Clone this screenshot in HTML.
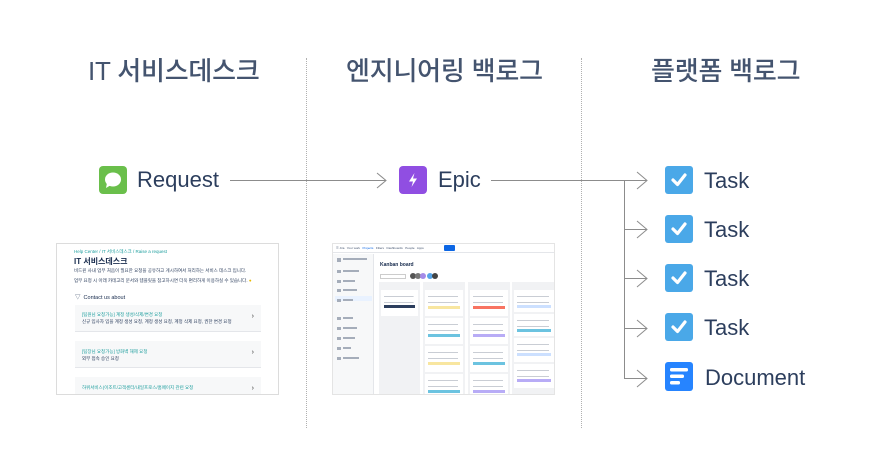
<!DOCTYPE html>
<html><head><meta charset="utf-8"><style>
*{margin:0;padding:0;box-sizing:border-box}
body{width:886px;height:451px;background:#fff;position:relative;overflow:hidden;font-family:"Liberation Sans","Noto Sans CJK KR",sans-serif;color:#44546f}
.a{position:absolute}
.h{font-size:26px;font-weight:500;color:#44546f;top:51px;white-space:nowrap;letter-spacing:-0.2px}
.vd{width:0;border-left:1px dotted #b0b0b0;top:58px;height:370px}
.lbl{font-size:22px;color:#2c3e5d;white-space:nowrap}
.ln{height:1px;background:#8c8c8c}
.ic{width:28px;height:28px;border-radius:4px}
.t{font-size:4.5px;line-height:5px;white-space:nowrap;overflow:hidden}
.cd{background:#fff repeating-linear-gradient(#fff 0 3px,#c9cdd4 3px 4px,#fff 4px 6px) no-repeat 3px 3px/80% 12px}
</style></head><body>
<div class="a h" style="left:88px">IT 서비스데스크</div>
<div class="a h" style="left:346px">엔지니어링 백로그</div>
<div class="a h" style="left:651px">플랫폼 백로그</div>
<div class="a vd" style="left:306px"></div>
<div class="a vd" style="left:581px"></div>

<div class="a ic" style="left:99px;top:166px;background:#6abf4b"></div>
<svg class="a" style="left:99px;top:166px" width="28" height="28"><ellipse cx="14" cy="13.5" rx="8" ry="7" fill="#fff"/><path d="M8 17 L7 22 L12 19Z" fill="#fff"/></svg>
<div class="a lbl" style="left:137px;top:167px">Request</div>
<div class="a ln" style="left:230px;top:180px;width:156px"></div>
<svg class="a" style="left:376px;top:172px" width="12" height="17"><path d="M1 1 L10 8.5 L1 16" fill="none" stroke="#8c8c8c" stroke-width="1"/></svg>

<div class="a ic" style="left:399px;top:166px;background:#904ee2"></div>
<svg class="a" style="left:399px;top:166px" width="28" height="28"><path d="M15.5 7 L10 15.5 H14 L12.5 21 L18 12.5 H14Z" fill="#fff"/></svg>
<div class="a lbl" style="left:438px;top:167px">Epic</div>
<div class="a ln" style="left:491px;top:180px;width:156px"></div>
<div class="a" style="left:624px;top:180px;width:1px;height:199px;background:#8c8c8c"></div>
<div class="a ln" style="left:624px;top:229px;width:23px"></div>
<div class="a ln" style="left:624px;top:278px;width:23px"></div>
<div class="a ln" style="left:624px;top:328px;width:23px"></div>
<div class="a ln" style="left:624px;top:378px;width:23px"></div>
<svg class="a" style="left:636px;top:0" width="14" height="451" fill="none" stroke="#8c8c8c" stroke-width="1">
<path d="M1 172 L11 180.5 L1 189"/><path d="M1 221 L11 229.5 L1 238"/><path d="M1 270 L11 278.5 L1 287"/><path d="M1 320 L11 328.5 L1 337"/><path d="M1 370 L11 378.5 L1 387"/>
</svg>

<svg class="a" style="left:665px;top:0" width="29" height="451">
<g fill="#4aa8e8"><rect x="0" y="166" width="28" height="28" rx="3"/><rect x="0" y="215" width="28" height="28" rx="3"/><rect x="0" y="264" width="28" height="28" rx="3"/><rect x="0" y="313" width="28" height="28" rx="3"/></g>
<g fill="none" stroke="#fff" stroke-width="3.2" stroke-linecap="round" stroke-linejoin="round">
<path d="M8 180 L12.5 184.5 L20 175"/><path d="M8 229 L12.5 233.5 L20 224"/><path d="M8 278 L12.5 282.5 L20 273"/><path d="M8 327 L12.5 331.5 L20 322"/></g>
<rect x="0" y="362" width="28" height="29" rx="3" fill="#2684ff"/>
<g fill="#fff"><rect x="5" y="368" width="18" height="3.5" rx="1.5"/><rect x="5" y="374.5" width="14" height="3.5" rx="1.5"/><rect x="5" y="381" width="10" height="3.5" rx="1.5"/></g>
</svg>
<div class="a lbl" style="left:704px;top:168px">Task</div>
<div class="a lbl" style="left:704px;top:217px">Task</div>
<div class="a lbl" style="left:704px;top:266px">Task</div>
<div class="a lbl" style="left:704px;top:315px">Task</div>
<div class="a lbl" style="left:705px;top:365px">Document</div>

<div class="a" style="left:56px;top:243px;width:223px;height:152px;border:1px solid #dcdcdc;overflow:hidden;background:#fff">
 <div class="a t" style="left:17px;top:5px;color:#1e9e9e">Help Center / IT 서비스데스크 / Raise a request</div>
 <div class="a" style="left:17px;top:12px;font-size:8px;font-weight:bold;color:#172b4d;white-space:nowrap">IT 서비스데스크</div>
 <div class="a t" style="left:17px;top:24px;color:#2c3e5d">비드윈 사내 업무 처음이 필요한 요청을 공유하고 게시하여서 처리하는 서비스 데스크 입니다.</div>
 <div class="a t" style="left:17px;top:34px;color:#2c3e5d">업무 요청 시 아래 카테고리 문서와 템플릿을 참고하시면 더욱 편리하게 이용하실 수 있습니다. <span style="color:#e8b900">●</span></div>
 <div class="a" style="left:18px;top:49px;font-size:5.5px;color:#172b4d;white-space:nowrap">▽ &nbsp;Contact us about</div>
 <div class="a" style="left:18px;top:61px;width:186px;height:27px;background:#f7f8f9;border-bottom:1px solid #e4e6ea"><div class="t" style="margin:7px 0 0 7px;color:#1e9e9e">[팀원님 요청가능] 계정 생성/삭제/변경 요청</div><div class="t" style="margin:2px 0 0 7px;color:#2c3e5d">신규 입사자 입을 계정 생성 요청, 계정 생성 요청, 계정 삭제 요청, 권한 변경 요청</div><div class="a" style="right:7px;top:8px;font-size:7px;color:#333">›</div></div>
 <div class="a" style="left:18px;top:97px;width:186px;height:27px;background:#f7f8f9;border-bottom:1px solid #e4e6ea"><div class="t" style="margin:8px 0 0 7px;color:#1e9e9e">[팀장님 요청가능] 방화벽 해제 요청</div><div class="t" style="margin:2px 0 0 7px;color:#2c3e5d">외부 접속 승인 요청</div><div class="a" style="right:7px;top:8px;font-size:7px;color:#333">›</div></div>
 <div class="a" style="left:18px;top:133px;width:186px;height:27px;background:#f7f8f9"><div class="t" style="margin:8px 0 0 7px;color:#1e9e9e">하위서비스(이조트/고객센터/내일프로스/홈페이지 관련 요청</div><div class="a" style="right:7px;top:8px;font-size:7px;color:#333">›</div></div>
</div>

<div class="a" style="left:332px;top:243px;width:223px;height:152px;border:1px solid #e4e4e4;overflow:hidden;background:#fff">
 <div class="a" style="left:0;top:0;width:223px;height:9px;border-bottom:1px solid #e4e6ea"></div>
 <div class="a t" style="left:3px;top:2px;color:#44546f;font-size:3px">☰ Jira &nbsp; Your work &nbsp; <span style="color:#0c66e4">Projects</span> &nbsp; Filters &nbsp; Dashboards &nbsp; People &nbsp; Apps</div>
 <div class="a" style="left:111px;top:1px;width:11px;height:6px;background:#0c66e4;border-radius:1px"></div>
 <div class="a" style="left:0;top:10px;width:41px;height:142px;background:#f7f8f9;border-right:1px solid #e4e6ea"></div>
 <div class="a" style="left:2px;top:52px;width:37px;height:5px;background:#e9f2ff"></div>
 <svg class="a" style="left:4px;top:14px" width="34" height="110"><g fill="#a5adba"><rect x="0" y="0" width="4" height="4"/><rect x="6" y="0" width="24" height="2"/><rect x="0" y="12" width="4" height="3"/><rect x="6" y="12" width="16" height="2"/><rect x="0" y="22" width="4" height="3"/><rect x="6" y="22" width="12" height="2"/><rect x="0" y="31" width="4" height="3"/><rect x="6" y="31" width="14" height="2"/><rect x="0" y="41" width="4" height="3"/><rect x="6" y="41" width="10" height="2"/><rect x="0" y="59" width="4" height="3"/><rect x="6" y="59" width="10" height="2"/><rect x="0" y="69" width="4" height="3"/><rect x="6" y="69" width="14" height="2"/><rect x="0" y="79" width="4" height="3"/><rect x="6" y="79" width="12" height="2"/><rect x="0" y="89" width="4" height="3"/><rect x="6" y="89" width="8" height="2"/><rect x="0" y="99" width="4" height="3"/><rect x="6" y="99" width="16" height="2"/></g></svg>
 <div class="a" style="left:47px;top:18px;font-size:5px;font-weight:bold;color:#172b4d;white-space:nowrap">Kanban board</div>
 <div class="a" style="left:47px;top:30px;width:26px;height:5px;border:1px solid #ccc"></div>
 <svg class="a" style="left:77px;top:28px" width="30" height="8"><circle cx="3" cy="4" r="3" fill="#555"/><circle cx="8" cy="4" r="3" fill="#777"/><circle cx="13" cy="4" r="3" fill="#a58be8"/><circle cx="20" cy="4" r="3" fill="#57a5e8"/><circle cx="25" cy="4" r="3" fill="#444"/></svg>
 <div class="a" style="left:46px;top:38px;width:41px;height:114px;background:#f1f2f4"></div>
 <div class="a" style="left:90px;top:38px;width:42px;height:114px;background:#f1f2f4"></div>
 <div class="a" style="left:135px;top:38px;width:42px;height:114px;background:#f1f2f4"></div>
 <div class="a" style="left:179px;top:38px;width:44px;height:114px;background:#f1f2f4"></div>
 <div class="a cd" style="left:48px;top:46px;width:37px;height:26px"><div style="margin:15px 3px 0;height:3px;background:#2c3e5d"></div></div>
 <div class="a cd" style="left:92px;top:46px;width:38px;height:26px"><div style="margin:16px 3px 0;height:3px;background:#f8e6a0"></div></div>
 <div class="a cd" style="left:92px;top:74px;width:38px;height:26px"><div style="margin:16px 3px 0;height:3px;background:#6cc3e0"></div></div>
 <div class="a cd" style="left:92px;top:102px;width:38px;height:26px"><div style="margin:16px 3px 0;height:3px;background:#f8e6a0"></div></div>
 <div class="a cd" style="left:92px;top:130px;width:38px;height:22px"><div style="margin:16px 3px 0;height:3px;background:#6cc3e0"></div></div>
 <div class="a cd" style="left:137px;top:46px;width:38px;height:26px"><div style="margin:16px 3px 0;height:3px;background:#f87462"></div></div>
 <div class="a cd" style="left:137px;top:74px;width:38px;height:26px"><div style="margin:16px 3px 0;height:3px;background:#b8acf6"></div></div>
 <div class="a cd" style="left:137px;top:102px;width:38px;height:26px"><div style="margin:16px 3px 0;height:3px;background:#6cc3e0"></div></div>
 <div class="a cd" style="left:137px;top:130px;width:38px;height:22px"><div style="margin:16px 3px 0;height:3px;background:#b8acf6"></div></div>
 <div class="a cd" style="left:181px;top:46px;width:40px;height:22px"><div style="margin:15px 3px 0;height:3px;background:#cce0ff"></div></div>
 <div class="a cd" style="left:181px;top:70px;width:40px;height:22px"><div style="margin:15px 3px 0;height:3px;background:#6cc3e0"></div></div>
 <div class="a cd" style="left:181px;top:94px;width:40px;height:24px"><div style="margin:15px 3px 0;height:3px;background:#cce0ff"></div></div>
 <div class="a cd" style="left:181px;top:120px;width:40px;height:24px"><div style="margin:15px 3px 0;height:3px;background:#b8acf6"></div></div>
</div>
</body></html>
